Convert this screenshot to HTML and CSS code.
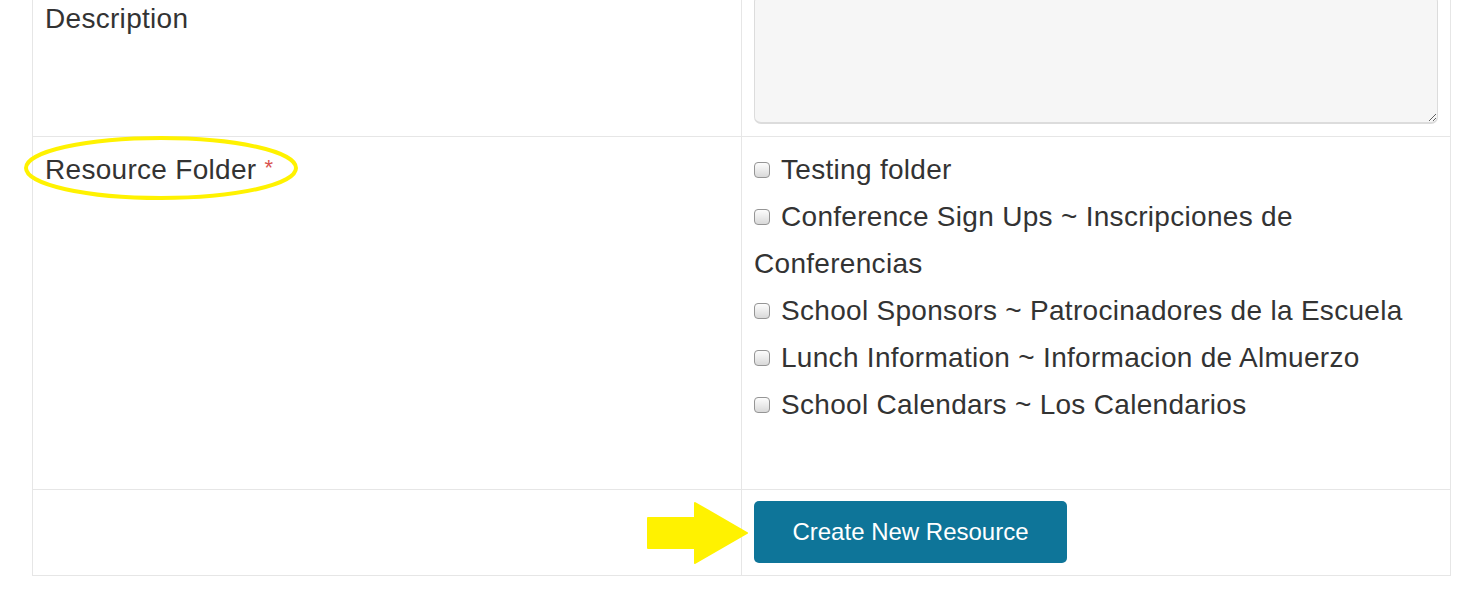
FILE: index.html
```html
<!DOCTYPE html>
<html>
<head>
<meta charset="utf-8">
<link rel="stylesheet" href="styles.css">
</head>
<body>
<div class="page">
  <table class="form-table">
    <colgroup>
      <col class="col-label">
      <col class="col-field">
    </colgroup>
    <tr>
      <td class="label-cell">Description</td>
      <td class="field-cell desc-cell"><textarea class="desc-input"></textarea></td>
    </tr>
    <tr>
      <td class="label-cell">Resource Folder <span class="req">*</span></td>
      <td class="field-cell">
        <div class="folder-list">
          <label class="folder"><input type="checkbox" class="box">Testing folder</label>
          <label class="folder"><input type="checkbox" class="box">Conference Sign Ups ~ Inscripciones de Conferencias</label>
          <label class="folder"><input type="checkbox" class="box">School Sponsors ~ Patrocinadores de la Escuela</label>
          <label class="folder"><input type="checkbox" class="box">Lunch Information ~ Informacion de Almuerzo</label>
          <label class="folder"><input type="checkbox" class="box">School Calendars ~ Los Calendarios</label>
        </div>
      </td>
    </tr>
    <tr>
      <td class="label-cell"></td>
      <td class="field-cell submit-cell"><button class="submit-btn">Create New Resource</button></td>
    </tr>
  </table>

  <svg class="mark-ellipse" width="290" height="80" viewBox="0 0 290 80">
    <ellipse cx="137" cy="32" rx="135" ry="30" fill="none" stroke="#fff200" stroke-width="4"/>
  </svg>
  <svg class="mark-arrow" width="104" height="64" viewBox="0 0 104 64">
    <path d="M2 16 H49 V1 L101 31 L49 61 V46 H2 Z" fill="#fff200" stroke="#fff200" stroke-width="2" stroke-linejoin="round"/>
  </svg>
</div>
</body>
</html>
```

FILE: styles.css
```css
html, body {
  margin: 0;
  padding: 0;
  background: #ffffff;
}

body {
  font-family: "Liberation Sans", Arial, sans-serif;
  color: #333333;
  font-size: 28px;
  line-height: 47px;
  letter-spacing: 0.3px;
}

.page {
  position: relative;
  display: flow-root;
  padding-left: 32px;
  height: 590px;
  overflow: hidden;
}

.form-table {
  margin-top: -15px;
  width: 1418px;
  border-collapse: collapse;
  table-layout: fixed;
}

.col-label {
  width: 709px;
}

.col-field {
  width: 709px;
}

.form-table td {
  border: 1px solid #e6e6e6;
  padding: 9px 12px 12px 12px;
  vertical-align: top;
}

.desc-input {
  display: block;
  box-sizing: border-box;
  width: 100%;
  height: 129px;
  margin: 0;
  background: #f6f6f6;
  border: 1px solid #dcdcdc;
  border-bottom-width: 2px;
  border-radius: 7px;
  font: inherit;
}

.req {
  color: #d9534f;
  font-size: 22px;
  line-height: 0;
  vertical-align: 4px;
}

.folder-list {
  display: flex;
  flex-direction: column;
  margin-bottom: 49px;
}

.folder {
  display: block;
}

.box {
  -webkit-appearance: none;
  appearance: none;
  display: inline-block;
  box-sizing: border-box;
  width: 16px;
  height: 16px;
  margin: 0 11px 0 0;
  vertical-align: 1px;
  border: 1px solid #959595;
  border-radius: 4px;
  background: linear-gradient(#fdfdfd, #d9d9d9);
}

.form-table .submit-cell {
  padding-top: 11px;
}

.submit-btn {
  display: block;
  width: 313px;
  height: 62px;
  border: none;
  border-radius: 5px;
  background: #0e7599;
  color: #ffffff;
  font-family: "Liberation Sans", Arial, sans-serif;
  font-size: 24px;
  letter-spacing: 0;
  padding: 0;
}

.mark-ellipse {
  position: absolute;
  left: 24px;
  top: 136px;
}

.mark-arrow {
  position: absolute;
  left: 646px;
  top: 502px;
}
```
